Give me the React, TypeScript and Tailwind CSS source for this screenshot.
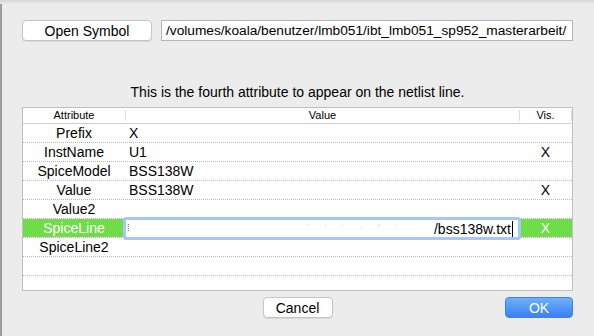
import React from "react";

type Row = { attr: string; value: string; vis: boolean };

const ROWS: Row[] = [
  { attr: "Prefix", value: "X", vis: false },
  { attr: "InstName", value: "U1", vis: true },
  { attr: "SpiceModel", value: "BSS138W", vis: false },
  { attr: "Value", value: "BSS138W", vis: true },
  { attr: "Value2", value: "", vis: false },
  { attr: "SpiceLine", value: "/bss138w.txt", vis: true },
  { attr: "SpiceLine2", value: "", vis: false },
  { attr: "", value: "", vis: false },
];

const SELECTED = 5;

function Dots() {
  return <div className="h-px w-full border-b border-dotted border-[#b8b8b8]" />;
}

function EditField({ text }: { text: string }) {
  // the in-place editor for the selected cell, drawn over the row
  return (
    <div className="absolute left-[-2px] right-[-2px] top-[-2px] bottom-[-3px] rounded-[3px] border-[3px] border-[#a7c8f6] bg-white flex items-center overflow-hidden">
      <span className="ml-[1px] text-[9px] leading-none text-[#444]">⁞</span>
      <div className="flex-1 flex items-center justify-end pr-[5px] text-[14px] text-black">
        <span className="text-[#dadada] mr-[30px] text-[10px] tracking-[6px]">˙ ‘ ˙ · ’ ˙</span>
        <span>{text}</span>
        <span className="inline-block w-px h-[16px] bg-black ml-[1px]" />
      </div>
    </div>
  );
}

function TableRow({ row, selected }: { row: Row; selected: boolean }) {
  return (
    <div className="flex flex-col">
      <div className="flex h-[18px] items-center text-[14px] leading-none">
        <div
          className={
            selected
              ? "w-[102px] h-full flex items-center justify-center bg-[#6fdd48] text-white"
              : "w-[102px] h-full flex items-center justify-center text-black"
          }
        >
          {row.attr}
        </div>
        <div className="relative w-[394px] h-full flex items-center pl-[4px] text-black">
          {selected ? <EditField text={row.value} /> : row.value}
        </div>
        <div
          className={
            selected
              ? "w-[53px] h-full flex items-center justify-center bg-[#6fdd48] text-white"
              : "w-[53px] h-full flex items-center justify-center text-black"
          }
        >
          {row.vis ? "X" : ""}
        </div>
      </div>
      <Dots />
    </div>
  );
}

export default function App() {
  return (
    <div
      className="relative w-[594px] h-[336px] overflow-hidden bg-[#ececec] text-black"
      style={{ fontFamily: '"Liberation Sans", Arial, sans-serif' }}
    >
      {/* desktop edge and title shadow */}
      <div className="absolute left-0 top-0 bottom-0 w-[2px] bg-[#9c9c9c]" />
      <div className="absolute left-0 right-0 top-0 h-[4px] bg-gradient-to-b from-[#d6d6d6] to-[#ececec]" />

      <div className="relative flex flex-col pl-[22px] pr-[21px]">
        {/* symbol row */}
        <div className="mt-[20px] flex items-center">
          <button className="w-[130px] h-[21px] rounded-[4px] border border-[#c4c4c4] bg-white text-[14px] leading-none shadow-[0_1px_0_rgba(0,0,0,0.08)]">
            Open Symbol
          </button>
          <div className="ml-[9px] flex-1 h-[21px] border border-[#b5b5b5] bg-white flex items-center pl-[4px] overflow-hidden whitespace-nowrap text-[13.7px] leading-none">
            /volumes/koala/benutzer/lmb051/ibt_lmb051_sp952_masterarbeit/
          </div>
        </div>

        <div className="mt-[43px] h-[16px] text-center text-[14px] leading-[16px]">
          This is the fourth attribute to appear on the netlist line.
        </div>

        {/* attribute table */}
        <div className="mt-[7px] h-[184px] border border-[#c0c0c0] bg-white flex flex-col overflow-hidden">
          <div className="flex h-[16px] items-center text-[11px] leading-none border-b border-[#cfcfcf]">
            <div className="w-[102px] flex justify-center">Attribute</div>
            <div className="w-[394px] h-[11px] flex justify-center border-l border-[#dcdcdc]">Value</div>
            <div className="w-[53px] h-[11px] flex justify-center border-l border-r border-[#dcdcdc]">Vis.</div>
          </div>
          {ROWS.map((r, i) => (
            <TableRow key={i} row={r} selected={i === SELECTED} />
          ))}
        </div>

        {/* dialog buttons */}
        <div className="mt-[6px] grid grid-cols-[1fr_auto_1fr] items-center">
          <div />
          <button className="w-[70px] h-[21px] rounded-[4px] border border-[#c4c4c4] bg-white text-[14px] leading-none shadow-[0_1px_0_rgba(0,0,0,0.08)]">
            Cancel
          </button>
          <div className="flex justify-end">
            <button className="w-[68px] h-[21px] rounded-[4px] border border-[#3f7ff0] bg-gradient-to-b from-[#6eb1fb] to-[#3a7ff5] text-white text-[14px] leading-none">
              OK
            </button>
          </div>
        </div>
      </div>
    </div>
  );
}
